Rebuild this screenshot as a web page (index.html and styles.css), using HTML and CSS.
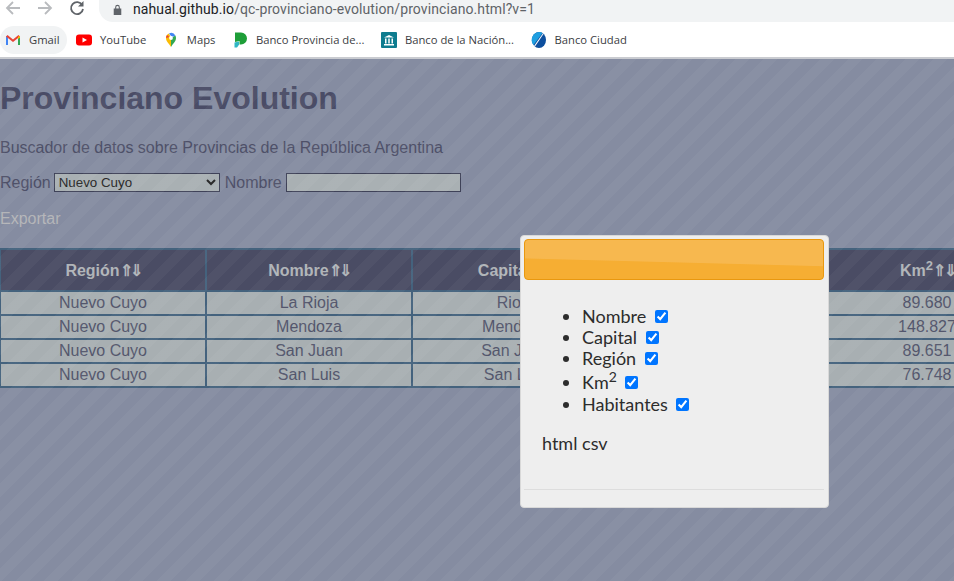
FILE: index.html
```html
<!DOCTYPE html>
<html lang="en">
<head>
    <meta charset="UTF-8">
    <meta name="viewport" content="width=device-width, initial-scale=1.0">
    <title>Provinciano Evolution</title>
    <link rel="stylesheet" href="styles.css">
</head>
<body>
    <div class="browser-bar">
        <div class="nav-row">
            <svg class="nav-icon" viewBox="0 0 16 16"><path d="M15 8H2M8 2 2 8l6 6" fill="none" stroke="#b9bbbe" stroke-width="1.8"/></svg>
            <svg class="nav-icon" viewBox="0 0 16 16"><path d="M1 8h13M8 2l6 6-6 6" fill="none" stroke="#b9bbbe" stroke-width="1.8"/></svg>
            <svg class="nav-icon" viewBox="0 0 16 16"><path d="M13.2 5A6 6 0 1 0 14 9" fill="none" stroke="#5f6368" stroke-width="1.8"/><path d="M14.5 1v5.6H9z" fill="#5f6368"/></svg>
            <div class="address">
                <svg class="lock" viewBox="0 0 10 12"><path d="M2.4 5V3.4a2.6 2.6 0 0 1 5.2 0V5H9.2v7H.8V5zM3.6 5h2.8V3.4a1.4 1.4 0 0 0-2.8 0z" fill="#5f6368"/></svg>
                <span class="host">nahual.github.io</span><span class="path">/qc-provinciano-evolution/provinciano.html?v=1</span>
            </div>
        </div>
        <div class="bookmarks">
            <div class="bookmark bookmark-active">
                <svg class="favicon" viewBox="0 0 16 16"><path d="M1 13V4l2 .5V13z" fill="#4285f4"/><path d="M13 13V4.500L15 4v9z" fill="#34a853"/><path d="M1 4.500 2.500 3 8 7.500 13.500 3 15 4.500 8 10z" fill="#ea4335"/><path d="M13 4.700 15 4v1.500L13 7z" fill="#fbbc04"/></svg>
                <span>Gmail</span>
            </div>
            <div class="bookmark">
                <svg class="favicon" viewBox="0 0 16 16"><rect y="2.500" width="16" height="11" rx="3" fill="#f00"/><path d="M6.500 5.500v5L11 8z" fill="#fff"/></svg>
                <span>YouTube</span>
            </div>
            <div class="bookmark">
                <svg class="favicon" viewBox="0 0 16 16"><path d="M8 15C6 11.500 3 9.500 3 6a5 5 0 0 1 3-4.600L8 6z" fill="#fbbc04"/><path d="M8 15c2-3.500 5-5.500 5-9a5 5 0 0 0-.6-2.400L8 6z" fill="#34a853"/><path d="M6 1.400A5 5 0 0 1 12.400 3.600L10 4.800 8 4z" fill="#4285f4"/><path d="M3 6a5 5 0 0 1 1-3l2.500 2z" fill="#ea4335"/><circle cx="8" cy="6" r="1.900" fill="#fff"/></svg>
                <span>Maps</span>
            </div>
            <div class="bookmark">
                <svg class="favicon" viewBox="0 0 16 16"><path d="M3 .5h6a6 6 0 0 1 0 12H7.500V9L3 10z" fill="#1e9e38"/><path d="M2.500 10.500 7 9.500v3.200l-2 2.800H2.500z" fill="#2fb6c4"/></svg>
                <span>Banco Provincia de...</span>
            </div>
            <div class="bookmark">
                <svg class="favicon" viewBox="0 0 16 16"><rect width="16" height="16" rx="1" fill="#0e7c8f"/><path d="M8 3l5 2.500H3zM4 6.500h1.500v5H4zM7.250 6.500h1.500v5h-1.500zM10.500 6.500H12v5h-1.500zM3 12h10v1.500H3z" fill="#fff"/></svg>
                <span>Banco de la Nación...</span>
            </div>
            <div class="bookmark">
                <svg class="favicon" viewBox="0 0 16 16"><ellipse cx="8" cy="8" rx="7" ry="8" fill="#0d4f9e"/><path d="M11.500 1.100 2.500 13A8 8 0 0 1 8 0a7 7 0 0 1 3.500 1.100z" fill="#1f9fe0"/><path d="M11.800 1.500 3.200 13.800l.8.700L12.500 2z" fill="#fff"/></svg>
                <span>Banco Ciudad</span>
            </div>
        </div>
    </div>

    <div class="page">
        <h1>Provinciano Evolution</h1>
        <p>Buscador de datos sobre Provincias de la República Argentina</p>
        <form class="filters">
            <label for="region">Región</label>
            <select id="region">
                <option>Nuevo Cuyo</option>
            </select>
            <label for="nombre">Nombre</label>
            <input type="text" id="nombre">
        </form>
        <a class="export-link">Exportar</a>

        <table class="data-table">
            <thead>
                <tr>
                    <th>Región<span class="sort">⇑⇓</span></th>
                    <th>Nombre<span class="sort">⇑⇓</span></th>
                    <th>Capital<span class="sort">⇑⇓</span></th>
                    <th></th>
                    <th>Km<sup>2</sup><span class="sort">⇑⇓</span></th>
                </tr>
            </thead>
            <tbody>
                <tr><td>Nuevo Cuyo</td><td>La Rioja</td><td>Rioja</td><td></td><td>89.680</td></tr>
                <tr><td>Nuevo Cuyo</td><td>Mendoza</td><td>Mendoza</td><td></td><td>148.827</td></tr>
                <tr><td>Nuevo Cuyo</td><td>San Juan</td><td>San Juan</td><td></td><td>89.651</td></tr>
                <tr><td>Nuevo Cuyo</td><td>San Luis</td><td>San Luis</td><td></td><td>76.748</td></tr>
            </tbody>
        </table>

        <div class="stripes"></div>

        <div class="modal">
            <div class="modal-header"></div>
            <div class="modal-body">
                <ul class="field-list">
                    <li>Nombre <input type="checkbox" checked></li>
                    <li>Capital <input type="checkbox" checked></li>
                    <li>Región <input type="checkbox" checked></li>
                    <li class="field-km">Km<sup>2</sup> <input type="checkbox" checked></li>
                    <li>Habitantes <input type="checkbox" checked></li>
                </ul>
                <p class="formats">html csv</p>
            </div>
            <div class="modal-footer"></div>
        </div>
    </div>
</body>
</html>
```

FILE: styles.css
```css
/* Provinciano Evolution, export dialog open */
html,
body {
    margin: 0;
    height: 100%;
    overflow: hidden;
}

body {
    font-family: "Liberation Sans", Arial, sans-serif;
    font-size: 16px;
    display: flex;
    flex-direction: column;
}

/* Browser chrome */
.browser-bar {
    height: 57px;
    background-color: white;
    border-bottom: 2px solid #c9cbd0;
    font-family: "Open Sans", sans-serif;
    flex-shrink: 0;
}

.nav-row {
    height: 22px;
    display: flex;
    align-items: flex-start;
    padding-left: 5px;
}

.nav-icon {
    width: 16px;
    height: 16px;
    margin-right: 16px;
}

.nav-icon:nth-child(3) {
    margin-right: 14px;
}

.address {
    padding: 0 0 4px 14px;
    box-sizing: border-box;
    width: 855px;
    height: 22px;
    background-color: #f1f3f4;
    border-radius: 0 0 0 14px;
    display: flex;
    align-items: center;
    font-family: "Roboto", sans-serif;
    font-size: 14px;
    letter-spacing: 0.09px;
}

.lock {
    width: 9px;
    height: 11px;
    margin-right: 11px;
}

.host {
    color: #202124;
}

.path {
    color: #5f6368;
}

.bookmarks {
    height: 35px;
    display: flex;
    align-items: center;
    font-size: 11.25px;
    color: #3c4043;
}

.bookmark {
    display: flex;
    align-items: center;
    gap: 8px;
    height: 28px;
    padding: 0 7px;
    margin-right: 2.5px;
    border-radius: 14px;
    white-space: nowrap;
}

.bookmark-active {
    padding-left: 5px;
    background-color: #f1f3f4;
}

.favicon {
    width: 16px;
    height: 16px;
    flex-shrink: 0;
}

/* Page under the dialog */
.page {
    position: relative;
    flex: 1;
    overflow: hidden;
    background-color: #858ca1;
    color: #4e5068;
}

h1 {
    font-size: 32px;
    line-height: 37px;
    margin: 21px 0 22px;
    color: #4a4c66;
}

p {
    margin: 0 0 15px;
    line-height: 18px;
}

.filters {
    display: flex;
    align-items: center;
    gap: 4px;
    height: 21px;
    margin-bottom: 17px;
}

.filters select {
    width: 166px;
    height: 19px;
    padding: 0;
    margin: 0 1px 0 -1px;
    background-color: #a9b0b3;
    border: 1px solid #3f4258;
    border-radius: 0;
    font-family: "Liberation Sans", Arial, sans-serif;
    font-size: 13.33px;
    color: #2a2a2a;
}

.filters input {
    width: 175px;
    height: 19px;
    padding: 0;
    box-sizing: border-box;
    background-color: #a9b0b3;
    border: 1px solid #3f4258;
}

.export-link {
    display: block;
    line-height: 18px;
    color: #b4b5b8;
    margin-bottom: 20px;
}

.data-table {
    border-collapse: collapse;
    table-layout: fixed;
    width: 1030px;
    margin-left: -1px;
    text-align: center;
}

.data-table th,
.data-table td {
    box-sizing: border-box;
    width: 206px;
    border: 2px solid #44627d;
    padding: 0;
}

.data-table th {
    height: 42px;
    background-color: #4a4c64;
    color: #b0b4b8;
}

.data-table td {
    height: 24px;
    background-color: #a8afb2;
    color: #53566c;
}

.data-table sup {
    font-size: 13px;
    line-height: 0;
}

.sort {
    letter-spacing: -2.5px;
}

.stripes {
    position: absolute;
    inset: 0;
    background-image: repeating-linear-gradient(135deg, rgba(255, 255, 255, 0.035) 0 10px, rgba(0, 0, 0, 0) 10px 20px);
}

/* Export dialog */
.modal {
    position: absolute;
    left: 520px;
    top: 176px;
    width: 309px;
    height: 273px;
    box-sizing: border-box;
    padding: 3px 4px 3px 3px;
    background-color: #eeeeee;
    border: 1px solid #d8d8d8;
    border-radius: 4px;
    display: flex;
    flex-direction: column;
    font-family: "Lato", sans-serif;
    font-size: 18px;
    color: #2c2c2c;
}

.modal-header {
    height: 41px;
    box-sizing: border-box;
    background-color: #f6ae34;
    background-image: linear-gradient(181.5deg, #f7b84f 55%, #f6ae33 57%);
    border: 1px solid #e9980f;
    border-radius: 4px;
    flex-shrink: 0;
}

.modal-body {
    flex: 1;
    padding: 26px 18px 0;
}

.field-list {
    margin: 0;
    padding-left: 40px;
}

.field-list li {
    line-height: 21px;
}

.field-list .field-km {
    padding: 3px 0 1px;
}

.field-list sup {
    font-size: 14px;
    line-height: 0;
}

.field-list input {
    width: 13px;
    height: 13px;
    margin: 0 0 0 4px;
    accent-color: #0075ff;
}

.formats {
    margin: 18px 0 0;
    line-height: 21px;
}

.modal-footer {
    height: 14px;
    border-top: 1px solid #dddddd;
    flex-shrink: 0;
}
```
